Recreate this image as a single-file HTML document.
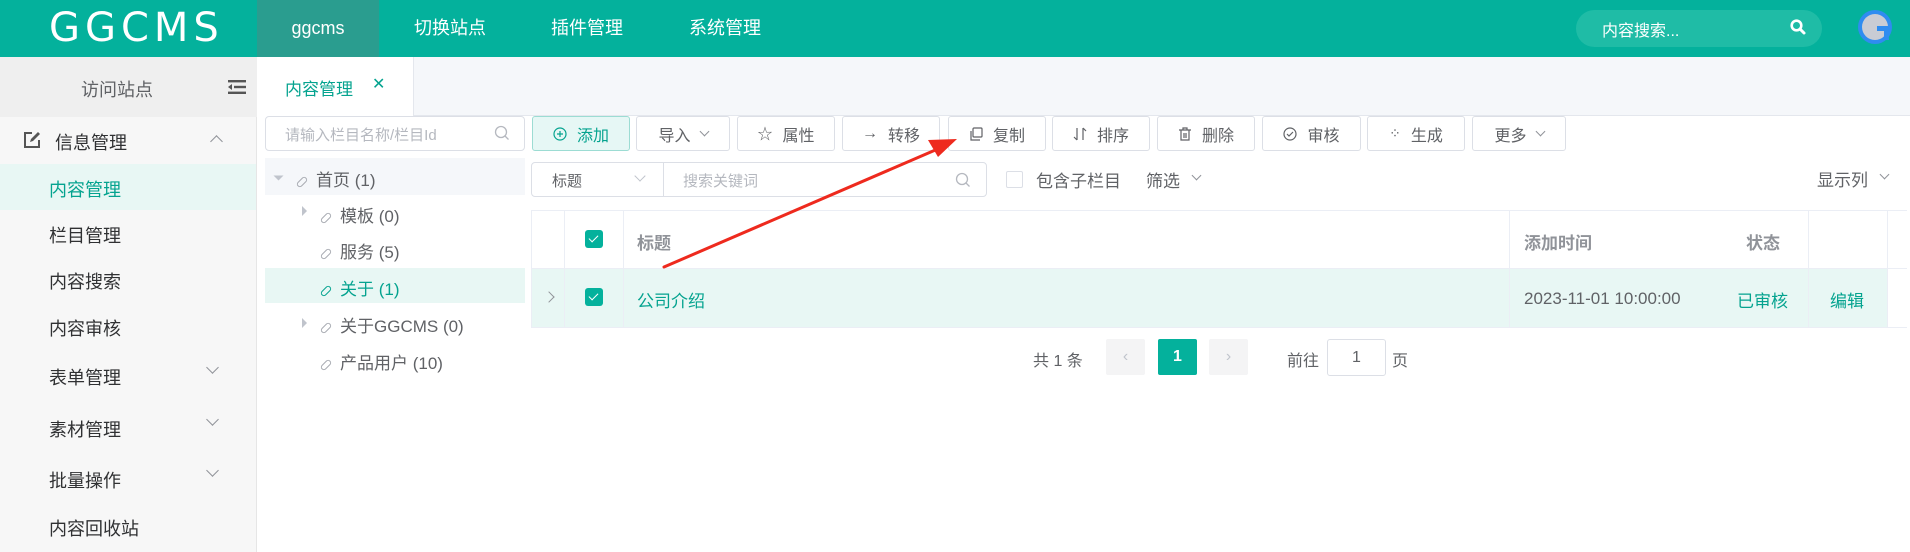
<!DOCTYPE html>
<html><head><meta charset="utf-8">
<style>
*{box-sizing:border-box;margin:0;padding:0}
body{width:1910px;height:552px;overflow:hidden;background:#fff;font-family:"Liberation Sans","Noto Sans CJK SC",sans-serif;color:#606266;position:relative}
.a{position:absolute}
.hdr{left:0;top:0;width:1910px;height:57px;background:#04b19c}
.logo{left:49px;top:5px;color:#fff;font-size:40px;letter-spacing:5px;font-family:"DejaVu Sans","Liberation Sans",sans-serif;font-weight:normal}
.nav{top:0;height:57px;line-height:57px;color:#fff;font-size:18px}
.side{left:0;top:57px;width:257px;height:495px;background:#f7f7f7;border-right:1px solid #e6e6e6}
.mi{left:49px;font-size:18px;color:#303133}
.chev{width:9px;height:9px;border-right:1.3px solid #909399;border-bottom:1.3px solid #909399;transform:rotate(45deg)}
.btn{top:116px;height:35px;border:1px solid #dcdfe6;border-radius:3px;background:#fff;font-size:16px;color:#606266;display:flex;align-items:center;justify-content:center;gap:10px}
.tn{font-size:17px;color:#606266}
.link{display:inline-block;width:12px;height:6px;border:1.3px solid #a8abb2;border-radius:4px;transform:rotate(-45deg);margin-right:8px;vertical-align:middle}
.tri{width:0;height:0;border-left:5px solid #c0c4cc;border-top:5px solid transparent;border-bottom:5px solid transparent}
.cb{width:18px;height:18px;background:#04b19c;border-radius:3px}
.cb::after{content:"";position:absolute;left:6px;top:3px;width:4px;height:8px;border-right:1.5px solid #fff;border-bottom:1.5px solid #fff;transform:rotate(45deg)}
.vl{width:1px;background:#ebeef5}
</style></head><body>
<div class="a hdr"></div>
<div class="a logo">GGCMS</div>
<div class="a nav" style="left:257px;width:122px;background:#2a9d8f;text-align:center">ggcms</div>
<div class="a nav" style="left:414px">切换站点</div>
<div class="a nav" style="left:551px">插件管理</div>
<div class="a nav" style="left:689px">系统管理</div>
<div class="a" style="left:1576px;top:10px;width:246px;height:37px;border-radius:19px;background:#1fbca6"></div>
<div class="a" style="left:1602px;top:17px;color:#fff;font-size:16px">内容搜索...</div>
<svg class="a" style="left:1789px;top:18px" width="18" height="18" viewBox="0 0 18 18"><circle cx="7.5" cy="7.5" r="4.8" fill="none" stroke="#fff" stroke-width="2.6"/><path d="M11 11l4 4" stroke="#fff" stroke-width="3" stroke-linecap="round"/></svg>
<svg class="a" style="left:1857px;top:9px" width="36" height="36" viewBox="0 0 36 36"><circle cx="18" cy="18" r="17" fill="#2f8cf0"/><circle cx="18" cy="18" r="13" fill="#c9ccd4"/><path d="M31 17H20v5h7v9h5z" fill="#2f8cf0"/></svg>

<div class="a side"></div>
<div class="a" style="left:0;top:57px;width:257px;height:60px;background:#efefef"></div>
<div class="a" style="left:81px;top:76px;font-size:18px;color:#606266">访问站点</div>
<svg class="a" style="left:228px;top:80px" width="20" height="14" viewBox="0 0 20 14"><rect x="0" y="0" width="18" height="2.4" fill="#555"/><rect x="6" y="5.8" width="12" height="2.4" fill="#555"/><rect x="0" y="11.6" width="18" height="2.4" fill="#555"/><path d="M0 7l4-3v6z" fill="#555"/></svg>
<svg class="a" style="left:23px;top:131px" width="18" height="18" viewBox="0 0 18 18"><path d="M9 2H2v14h14V9" fill="none" stroke="#555" stroke-width="2"/><path d="M7 11l1-3 7-7 2 2-7 7z" fill="#555"/></svg>
<div class="a mi" style="left:55px;top:129px">信息管理</div>
<div class="a chev" style="left:212px;top:137px;transform:rotate(225deg)"></div>
<div class="a" style="left:0;top:164px;width:256px;height:46px;background:#e8f7f4"></div>
<div class="a mi" style="top:176px;color:#04a38f">内容管理</div>
<div class="a mi" style="top:222px">栏目管理</div>
<div class="a mi" style="top:268px">内容搜索</div>
<div class="a mi" style="top:315px">内容审核</div>
<div class="a mi" style="top:364px">表单管理</div><div class="a chev" style="left:208px;top:363px"></div>
<div class="a mi" style="top:416px">素材管理</div><div class="a chev" style="left:208px;top:415px"></div>
<div class="a mi" style="top:467px">批量操作</div><div class="a chev" style="left:208px;top:466px"></div>
<div class="a mi" style="top:515px">内容回收站</div>

<div class="a" style="left:258px;top:57px;width:1652px;height:59px;background:#f5f7fa;border-bottom:1px solid #e4e7ed"></div>
<div class="a" style="left:258px;top:57px;width:156px;height:60px;background:#fff;border-right:1px solid #e4e7ed"></div>
<div class="a" style="left:285px;top:75px;font-size:17px;color:#04a38f">内容管理</div>
<div class="a" style="left:372px;top:74px;font-size:16px;color:#04a38f">✕</div>

<div class="a" style="left:265px;top:116px;width:260px;height:35px;border:1px solid #dcdfe6;border-radius:4px"></div>
<div class="a" style="left:285px;top:124px;font-size:15px;color:#b5b8bf">请输入栏目名称/栏目Id</div>
<svg class="a" style="left:494px;top:125px" width="16" height="16" viewBox="0 0 16 16"><circle cx="7" cy="7" r="5.5" fill="none" stroke="#b5b8bf" stroke-width="1.3"/><path d="M11 11l3.5 3.5" stroke="#b5b8bf" stroke-width="1.3"/></svg>
<div class="a" style="left:265px;top:158px;width:260px;height:37px;background:#f5f7fa"></div>
<div class="a tri" style="left:276px;top:173px;transform:rotate(90deg)"></div>
<div class="a tn" style="left:296px;top:166px"><span class="link"></span>首页 (1)</div>
<div class="a tri" style="left:302px;top:206px"></div>
<div class="a tn" style="left:320px;top:202px"><span class="link"></span>模板 (0)</div>
<div class="a tn" style="left:320px;top:238px"><span class="link"></span>服务 (5)</div>
<div class="a" style="left:265px;top:268px;width:260px;height:35px;background:#e8f7f4"></div>
<div class="a tn" style="left:320px;top:275px;color:#04a38f"><span class="link" style="border-color:#04a38f"></span>关于 (1)</div>
<div class="a tri" style="left:302px;top:318px"></div>
<div class="a tn" style="left:320px;top:312px"><span class="link"></span>关于GGCMS (0)</div>
<div class="a tn" style="left:320px;top:349px"><span class="link"></span>产品用户 (10)</div>

<div class="a btn" style="left:532px;width:98px;background:#e6f7f5;border-color:#9cdcd3;color:#04a38f"><svg width="14" height="14" viewBox="0 0 14 14"><circle cx="7" cy="7" r="6" fill="none" stroke="#04a38f" stroke-width="1.2"/><path d="M7 4v6M4 7h6" stroke="#04a38f" stroke-width="1.2"/></svg>添加</div>
<div class="a btn" style="left:636px;width:94px">导入<span class="chev" style="width:7px;height:7px;margin-top:-4px"></span></div>
<div class="a btn" style="left:737px;width:98px"><span style="font-size:15px">☆</span>属性</div>
<div class="a btn" style="left:842px;width:98px"><span>→</span>转移</div>
<div class="a btn" style="left:948px;width:98px"><svg width="14" height="14" viewBox="0 0 14 14"><rect x="4" y="1" width="9" height="9" rx="1" fill="none" stroke="#606266" stroke-width="1.2"/><path d="M2 4v9h9" fill="none" stroke="#606266" stroke-width="1.2"/></svg>复制</div>
<div class="a btn" style="left:1052px;width:98px"><svg width="14" height="14" viewBox="0 0 14 14"><path d="M4 1v12M1 10l3 3M10 1v12M10 1l3 3" fill="none" stroke="#606266" stroke-width="1.2"/></svg>排序</div>
<div class="a btn" style="left:1157px;width:98px"><svg width="14" height="14" viewBox="0 0 14 14"><path d="M1 3h12M5 3V1h4v2M3 3v10h8V3M6 6v5M8 6v5" fill="none" stroke="#606266" stroke-width="1.2"/></svg>删除</div>
<div class="a btn" style="left:1262px;width:99px"><svg width="14" height="14" viewBox="0 0 14 14"><circle cx="7" cy="7" r="6" fill="none" stroke="#606266" stroke-width="1.2"/><path d="M4 7l2 2 4-4" fill="none" stroke="#606266" stroke-width="1.2"/></svg>审核</div>
<div class="a btn" style="left:1367px;width:98px"><span style="font-size:14px">⁘</span>生成</div>
<div class="a btn" style="left:1472px;width:94px">更多<span class="chev" style="width:7px;height:7px;margin-top:-4px"></span></div>

<div class="a" style="left:531px;top:162px;width:456px;height:35px;border:1px solid #dcdfe6;border-radius:4px"></div>
<div class="a" style="left:663px;top:162px;width:1px;height:35px;background:#dcdfe6"></div>
<div class="a" style="left:552px;top:170px;font-size:15px;color:#606266">标题</div>
<div class="a chev" style="left:636px;top:172px;width:8px;height:8px;border-color:#c0c4cc"></div>
<div class="a" style="left:683px;top:170px;font-size:15px;color:#b5b8bf">搜索关键词</div>
<svg class="a" style="left:955px;top:172px" width="16" height="16" viewBox="0 0 16 16"><circle cx="7" cy="7" r="5.5" fill="none" stroke="#b5b8bf" stroke-width="1.3"/><path d="M11 11l3.5 3.5" stroke="#b5b8bf" stroke-width="1.3"/></svg>
<div class="a" style="left:1006px;top:171px;width:17px;height:17px;border:1px solid #dcdfe6;border-radius:2px"></div>
<div class="a" style="left:1036px;top:167px;font-size:17px">包含子栏目</div>
<div class="a" style="left:1146px;top:167px;font-size:17px">筛选</div>
<div class="a chev" style="left:1193px;top:172px;width:7px;height:7px"></div>
<div class="a" style="left:1817px;top:166px;font-size:17px">显示列</div>
<div class="a chev" style="left:1881px;top:171px;width:7px;height:7px"></div>

<div class="a" style="left:531px;top:210px;width:1376px;height:1px;background:#ebeef5"></div>
<div class="a" style="left:531px;top:268px;width:1356px;height:59px;background:#e8f7f4"></div>
<div class="a" style="left:531px;top:268px;width:1376px;height:1px;background:#ebeef5"></div>
<div class="a" style="left:531px;top:327px;width:1376px;height:1px;background:#ebeef5"></div>
<div class="a vl" style="left:531px;top:210px;height:117px"></div>
<div class="a vl" style="left:564px;top:210px;height:117px"></div>
<div class="a vl" style="left:623px;top:210px;height:117px"></div>
<div class="a vl" style="left:1509px;top:210px;height:117px"></div>
<div class="a vl" style="left:1808px;top:210px;height:117px"></div>
<div class="a vl" style="left:1887px;top:210px;height:117px"></div>
<div class="a cb" style="left:585px;top:230px"></div>
<div class="a cb" style="left:585px;top:288px"></div>
<div class="a" style="left:637px;top:229px;font-size:17px;font-weight:bold;color:#909399">标题</div>
<div class="a" style="left:1524px;top:229px;font-size:17px;font-weight:bold;color:#909399">添加时间</div>
<div class="a" style="left:1746px;top:229px;font-size:17px;font-weight:bold;color:#909399">状态</div>
<div class="a chev" style="left:545px;top:293px;width:8px;height:8px;transform:rotate(-45deg)"></div>
<div class="a" style="left:637px;top:287px;font-size:17px;color:#04a38f">公司介绍</div>
<div class="a" style="left:1524px;top:285px;font-size:17px;line-height:28px;color:#606266">2023-11-01 10:00:00</div>
<div class="a" style="left:1737px;top:287px;font-size:17px;color:#04a38f">已审核</div>
<div class="a" style="left:1830px;top:287px;font-size:17px;color:#04a38f">编辑</div>

<div class="a" style="left:1033px;top:347px;font-size:16px">共 1 条</div>
<div class="a" style="left:1106px;top:339px;width:39px;height:36px;background:#f4f4f5;border-radius:2px;color:#c0c4cc;text-align:center;line-height:36px">‹</div>
<div class="a" style="left:1158px;top:339px;width:39px;height:36px;background:#04b19c;border-radius:2px;color:#fff;font-weight:bold;font-size:16px;text-align:center;line-height:36px">1</div>
<div class="a" style="left:1209px;top:339px;width:39px;height:36px;background:#f4f4f5;border-radius:2px;color:#c0c4cc;text-align:center;line-height:36px">›</div>
<div class="a" style="left:1287px;top:347px;font-size:16px">前往</div>
<div class="a" style="left:1327px;top:339px;width:59px;height:37px;border:1px solid #dcdfe6;border-radius:3px;text-align:center;line-height:35px;font-size:16px">1</div>
<div class="a" style="left:1392px;top:347px;font-size:16px">页</div>

<svg class="a" style="left:0;top:0" width="1910" height="552"><path d="M664 267L940 148" stroke="#ee2a1e" stroke-width="3" stroke-linecap="round"/><path d="M957 139L928 140L938 157Z" fill="#ee2a1e"/></svg>
</body></html>
